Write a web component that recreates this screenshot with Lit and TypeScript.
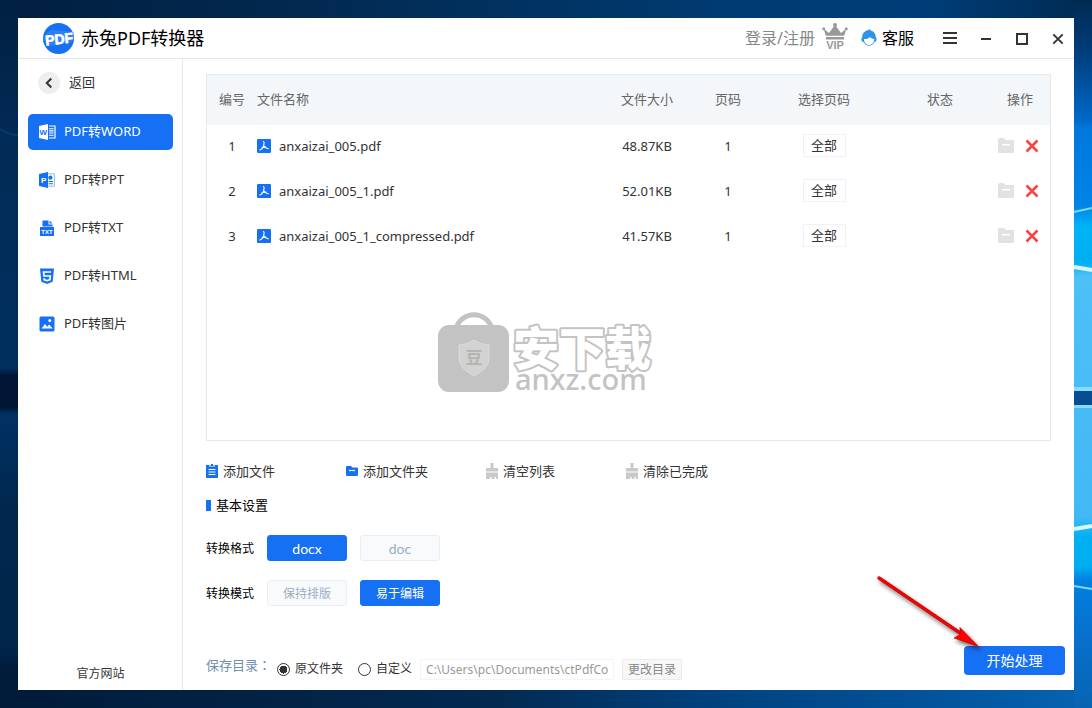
import { LitElement, html, css, svg, nothing } from "lit";
import { customElement, state } from "lit/decorators.js";
import { classMap } from "lit/directives/class-map.js";

const icons = {
  word: svg`<path d="M1 3 10 1v16L1 15z" fill="#fff"/><path d="M11 3h6v12h-6" fill="none" stroke="#fff" stroke-width="1.2"/><path d="M11 5.8h4.6M11 7.9h4.6M11 10h4.6M11 12.2h4.6" stroke="#fff" stroke-width="1.1"/><text x="5.4" y="12" font-size="8" font-weight="700" text-anchor="middle" fill="#1670f3">W</text>`,
  ppt: svg`<path d="M1 3 10 1v16L1 15z" fill="#1670f3"/><path d="M10 2.8h6.4v12.4H10" fill="none" stroke="#8db9f9" stroke-width="1"/><circle cx="12.4" cy="6.7" r="2.1" fill="#1670f3"/><path d="M10.5 10.5h4.5M10.5 12.7h4.5" stroke="#1670f3" stroke-width="1.1"/><text x="5.6" y="12" font-size="8" font-weight="700" text-anchor="middle" fill="#fff">P</text>`,
  txt: svg`<path d="M4.5 1.5h6v4h4v2h-10z" fill="#1670f3"/><path d="m11.5 1.5 3 3h-3z" fill="#1670f3"/><path d="M2 8h14v9H2z" fill="#1670f3"/><text x="9" y="15" font-size="6" font-weight="700" text-anchor="middle" fill="#fff">TXT</text>`,
  html: svg`<path d="M2 1.5h14l-1.3 13.2L9 17l-5.7-2.3z" fill="#1670f3"/><path d="M13 5H5.6l.4 4h6.3l-.4 3.6L9 13.7l-2.8-1.1-.1-1.3" fill="none" stroke="#fff" stroke-width="1.7"/>`,
  image: svg`<rect x="1.5" y="1.5" width="15" height="15" rx="1.5" fill="#1670f3"/><path d="M3.5 13.5 7 9l2.2 2.8 2-2.3 3.5 4z" fill="#fff"/><circle cx="11.8" cy="5.5" r="1.5" fill="#fff"/>`,
  addFile: svg`<path d="M0 1h12v13H0z" fill="#1670f3"/><path d="M3 1h6v2H3z" fill="#8db9f9"/><path d="M5 0h2v2H5z" fill="#1670f3"/><path d="M2.5 5.5h7M2.5 8h7M2.5 10.5h7" stroke="#fff"/>`,
  addFolder: svg`<path d="M0 3q0-1 1-1h4l1.5 1.5H11q1 0 1 1V11q0 1-1 1H1q-1 0-1-1z" fill="#1670f3"/><path d="M3 6.5h6" stroke="#fff" stroke-width="1.2"/>`,
  brush: svg`<path d="M4.500-1h3v5H12V7.500H0V4h4.500z" fill="#c9c9c9"/><path d="M0 8.500h12V15h-2v-2H8.500v2H5.500v-2H4v2H0z" fill="#c9c9c9"/>`,
};

const tasks = [
  { icon: icons.word, label: "PDF转WORD" },
  { icon: icons.ppt, label: "PDF转PPT" },
  { icon: icons.txt, label: "PDF转TXT" },
  { icon: icons.html, label: "PDF转HTML" },
  { icon: icons.image, label: "PDF转图片" },
];

const files = [
  { name: "anxaizai_005.pdf", size: "48.87KB", pages: 1 },
  { name: "anxaizai_005_1.pdf", size: "52.01KB", pages: 1 },
  { name: "anxaizai_005_1_compressed.pdf", size: "41.57KB", pages: 1 },
];

const tools = [
  { icon: icons.addFile, label: "添加文件" },
  { icon: icons.addFolder, label: "添加文件夹" },
  { icon: icons.brush, label: "清空列表" },
  { icon: icons.brush, label: "清除已完成" },
];

@customElement("desktop-wallpaper")
class DesktopWallpaper extends LitElement {
  static styles = css`
    :host { display: block; position: absolute; inset: 0; }
    svg { display: block; width: 100%; height: 100%; }
  `;
  render() {
    return html`<svg viewBox="0 0 1092 708" preserveAspectRatio="none" aria-hidden="true">
      <defs>
        <linearGradient id="top"><stop offset="0" stop-color="#011f40"/><stop offset=".3" stop-color="#022a52"/><stop offset=".68" stop-color="#003c73"/><stop offset=".85" stop-color="#003d78"/><stop offset="1" stop-color="#002a52"/></linearGradient>
        <linearGradient id="bottom"><stop offset="0" stop-color="#011b39"/><stop offset=".45" stop-color="#03294f"/><stop offset=".64" stop-color="#00407b"/><stop offset=".85" stop-color="#02539b"/><stop offset="1" stop-color="#0764b2"/></linearGradient>
        <linearGradient id="left" x2="0" y2="1"><stop offset="0" stop-color="#012041"/><stop offset=".19" stop-color="#022a56"/><stop offset=".52" stop-color="#00305f"/><stop offset=".53" stop-color="#001634"/><stop offset=".575" stop-color="#001634"/><stop offset=".585" stop-color="#003263"/><stop offset=".72" stop-color="#00274e"/><stop offset=".92" stop-color="#00254b"/><stop offset=".94" stop-color="#011d3c"/><stop offset="1" stop-color="#011b39"/></linearGradient>
        <linearGradient id="right" x2="0" y2="1"><stop offset="0" stop-color="#002a52"/><stop offset=".07" stop-color="#003c78"/><stop offset=".17" stop-color="#0068c8"/><stop offset=".18" stop-color="#0078dc"/><stop offset=".29" stop-color="#0084e8"/><stop offset=".32" stop-color="#00b4f4"/><stop offset=".37" stop-color="#00aef2"/><stop offset=".39" stop-color="#4cc0f7"/><stop offset=".73" stop-color="#42b8f5"/><stop offset=".76" stop-color="#00b0f2"/><stop offset=".8" stop-color="#00aef2"/><stop offset=".82" stop-color="#0080e0"/><stop offset=".9" stop-color="#0870cc"/><stop offset="1" stop-color="#0764b2"/></linearGradient>
      </defs>
      <path d="M0 0h1092v18H0z" fill="url(#top)"/>
      <path d="M0 690h1092v18H0z" fill="url(#bottom)"/>
      <path d="M0 0h18v708H0z" fill="url(#left)"/>
      <path d="M1074 0h18v708h-18z" fill="url(#right)"/>
      <path d="M0 129q9 6 18 6" fill="none" stroke="#064a80" stroke-width="2" opacity=".6"/>
      <path d="m1074 212 18-4M1074 586l18 3" stroke="#7fd8f8" stroke-width="2"/>
      <path d="m1074 267 18 3M1074 529l18-3" stroke="#d8f6fb" stroke-width="4"/>
      <path d="M1074 387h18v21h-18z" fill="#8adcfb"/>
      <path d="M1074 391h18v14h-18z" fill="#084c94"/>
    </svg>`;
  }
}

@customElement("app-root")
class AppRoot extends LitElement {
  @state() private task = 0;
  @state() private format = "docx";
  @state() private mode = "易于编辑";

  static styles = css`
    :host {
      display: flex;
      position: relative;
      box-sizing: border-box;
      min-height: 100vh;
      padding: 18px;
      background: #012041;
      color: #333;
      font: 13px/18px "Noto Sans", "Noto Sans CJK SC", sans-serif;
    }
    * { box-sizing: border-box; }
    button, input { font: inherit; color: inherit; margin: 0; }
    button { display: flex; align-items: center; justify-content: center; padding: 0; border: 0; background: none; white-space: nowrap; }
    svg { display: block; flex: none; overflow: visible; }
    a { color: inherit; text-decoration: none; }

    .window { position: relative; flex: 1; min-width: 0; display: flex; flex-direction: column; background: #fff; }
    .titlebar { display: flex; align-items: center; height: 41px; padding: 0 8px 0 25px; border-bottom: 1px solid #e8e8e8; }
    .title { flex: 1; margin: 0 0 0 7px; font-size: 18px; line-height: 24px; font-weight: 400; color: #000; }
    .account { display: flex; align-items: center; font-size: 16px; line-height: 24px; }
    .login { color: #888; margin-right: 7px; }
    .vip { margin-right: 13px; }
    .service { display: flex; align-items: center; gap: 5px; color: #000; }
    .controls { display: flex; gap: 20px; margin-left: 28px; }
    .controls button { width: 16px; height: 18px; }

    .body { flex: 1; display: flex; min-height: 0; }
    .sidebar { flex: none; display: flex; flex-direction: column; width: 165px; padding: 13px 9px 7px 10px; border-right: 1px solid #e8e8e8; }
    .back { align-self: flex-start; gap: 9px; margin-left: 10px; height: 22px; }
    .tasks { display: flex; flex-direction: column; gap: 12px; margin-top: 20px; }
    .task { justify-content: flex-start; gap: 8px; height: 36px; padding-left: 10px; border-radius: 5px; }
    .task.active { background: #1670f3; color: #fff; }
    .site { margin-top: auto; text-align: center; font-size: 12px; }

    .main { flex: 1; min-width: 0; display: flex; flex-direction: column; padding: 15px 0 10px 23px; }
    .panel { flex: 1; min-height: 240px; margin-right: 23px; border: 1px solid #e6e8ea; }
    table { width: 100%; border-collapse: collapse; table-layout: fixed; }
    th { height: 50px; padding: 0 0 2px; background: #f3f7fa; color: #666; font-weight: 400; }
    td { height: 45px; padding: 0 0 4px; text-align: center; }
    .col-no { width: 50px; }
    .col-size { width: 90px; }
    .col-page { width: 72px; }
    .col-range { width: 120px; }
    .col-status { width: 112px; }
    .col-ops { width: 54px; }
    .left { text-align: left; }
    th.ops { padding-right: 6px; }
    .file { display: flex; align-items: center; gap: 8px; }
    .range { width: 43px; height: 23px; margin: 0 auto; padding-bottom: 2px; border: 1px solid #f0f1f2; }
    .ops-cell { display: flex; align-items: center; gap: 11px; padding-left: 2px; }

    .tools { display: flex; height: 18px; margin-top: 22px; }
    .tool { width: 140px; justify-content: flex-start; gap: 5px; }
    .label { padding-bottom: 2px; }
    h2 { display: flex; align-items: center; gap: 5px; margin: 15px 0 0; font-size: 13px; line-height: 18px; font-weight: 400; color: #000; }
    h2::before { content: ""; width: 5px; height: 11px; background: #1670f3; }
    .settings { display: grid; gap: 19px; margin-top: 21px; font-size: 12px; color: #000; }
    .setting { display: flex; align-items: center; gap: 13px; }
    .setting > span { padding-top: 2px; }
    .choice { width: 80px; height: 26px; padding-top: 2px; border: 1px solid #e9eff6; border-radius: 3px; background: #f8fafc; color: #9aaec5; }
    .choice.on { border-color: #1670f3; background: #1670f3; color: #fff; }
    .choice.latin { font-family: Lato, "Noto Sans CJK SC", sans-serif; font-size: 14px; }

    .save { display: flex; align-items: flex-end; margin-top: 40px; padding-right: 9px; font-size: 12px; }
    .save-label { margin: 0 6px 6px 0; font-size: 13px; color: #6f8eae; }
    .colon { font-family: "Noto Sans CJK TC", sans-serif; }
    .radio { display: flex; align-items: center; gap: 5px; height: 22px; margin-right: 15px; }
    .radio input { appearance: none; width: 13px; height: 13px; border: 1px solid #333; border-radius: 50%; }
    .radio input:checked { background: radial-gradient(circle, #333 0 4px, transparent 4px); }
    .radio.custom { margin-right: 8px; }
    .path { width: 194px; height: 21px; padding: 0 5px; border: 1px solid #f3f4f6; border-radius: 0; background: #fff; color: #999; }
    .change { width: 60px; height: 21px; margin-left: 8px; border: 1px solid #ececec; background: #f7f7f7; color: #888; }
    .start { width: 101px; height: 29px; margin: 0 0 5px auto; border-radius: 4px; background: #1670f3; color: #fff; font-size: 14px; }

    .watermark { position: absolute; left: 50%; top: 50%; transform: translate(-50%, -50%); pointer-events: none; }
    .pointer { position: absolute; right: 89px; bottom: 38px; pointer-events: none; }
  `;

  private choice(value: string, current: string, pick: (v: string) => void, latin = false) {
    return html`<button type="button" class=${classMap({ choice: true, latin, on: value === current })} @click=${() => pick(value)}>${value}</button>`;
  }

  private renderTitlebar() {
    return html`<header class="titlebar">
      <svg width="31" height="31" viewBox="0 0 31 31" aria-hidden="true">
        <circle cx="15.5" cy="15.5" r="15.5" fill="#1670f3"/>
        <path d="M0 15 5 9l4-2 22 2-2 10-21 4z" fill="#4a90f6" opacity=".5"/>
        <text x="16" y="21" text-anchor="middle" font-family="Liberation Sans" font-size="14" font-weight="700" fill="#fff" stroke="#fff" stroke-width=".6" transform="rotate(-6 15.5 15.5)">PDF</text>
      </svg>
      <h1 class="title">赤兔PDF转换器</h1>
      <div class="account">
        <a class="login" href="#">登录/注册</a>
        <svg class="vip" width="26" height="32" viewBox="0 0 26 32" aria-hidden="true">
          <g fill="#999"><path d="m1.500 6.500 5.500 4.500 5.200-7h1.600l5.200 7 5.500-4.500-2.300 7.300H3.800z"/><circle cx="1.700" cy="6.800" r="1.500"/><circle cx="13" cy="3" r="2"/><circle cx="24.300" cy="6.800" r="1.500"/><path d="M4 15h18v2.500H4z"/></g>
          <text x="13" y="27" text-anchor="middle" font-family="Liberation Sans" font-size="11" font-weight="700" fill="#999">VIP</text>
        </svg>
        <a class="service" href="#">
          <svg width="16" height="18" viewBox="0 0 16 18" aria-hidden="true"><path d="M8.500 0 7 1.300C3 2 1.200 5 1.300 8-.2 9.500.2 13 2.500 13c1.200 2.400 3.200 3.700 5.500 3.700s4.300-1.300 5.500-3.700c2.300 0 2.700-3.500 1.200-5C14.800 4.500 12.500 2 9.500 1.500z" fill="#2d92ea"/><path d="M3 10c2.500.2 4.500-.5 6-2 1 1.300 2.500 2 4.300 2 0 3.500-2.300 6-5.300 6s-5-2.500-5-6z" fill="#fff"/></svg>
          客服
        </a>
      </div>
      <div class="controls">
        <button type="button" aria-label="菜单"><svg width="16" height="14" viewBox="0 0 16 14"><path d="M1 2h14M1 7h14M1 12h14" stroke="#333" stroke-width="2"/></svg></button>
        <button type="button" aria-label="最小化"><svg width="12" height="12" viewBox="0 0 12 12"><path d="M1 7h10" stroke="#333" stroke-width="2"/></svg></button>
        <button type="button" aria-label="最大化"><svg width="12" height="12" viewBox="0 0 12 12"><path d="M1 2h10v10H1z" fill="none" stroke="#333" stroke-width="2"/></svg></button>
        <button type="button" aria-label="关闭"><svg width="12" height="12" viewBox="0 0 12 12"><path d="m1.300 2.300 9.400 9.400M10.700 2.300l-9.400 9.400" stroke="#333" stroke-width="1.900"/></svg></button>
      </div>
    </header>`;
  }

  private renderTable() {
    return html`<table>
      <colgroup><col class="col-no"><col><col class="col-size"><col class="col-page"><col class="col-range"><col class="col-status"><col class="col-ops"></colgroup>
      <thead><tr><th>编号</th><th class="left">文件名称</th><th>文件大小</th><th>页码</th><th>选择页码</th><th>状态</th><th class="ops">操作</th></tr></thead>
      <tbody>${files.map((f, i) => html`<tr>
        <td>${i + 1}</td>
        <td><div class="file">
          <svg width="14" height="14" viewBox="0 0 14 14" aria-hidden="true"><rect width="14" height="14" rx="1" fill="#1670f3"/><path d="M6.200 2.300C7.800 3 7 5.500 6.500 7 5.500 9.500 4 11 2.300 11M6.500 5.500C7 8 9.500 9.800 11.800 9.800M4.500 9.200c1.500-.8 3.500-1.200 5-.9" fill="none" stroke="#fff" stroke-width="1.100"/></svg>
          <span>${f.name}</span></div></td>
        <td>${f.size}</td><td>${f.pages}</td>
        <td><button type="button" class="range">全部</button></td>
        <td>${nothing}</td>
        <td><div class="ops-cell">
          <button type="button" aria-label="打开文件夹"><svg width="16" height="15" viewBox="0 0 16 15"><path d="M0 1.500Q0 0 1.500 0H6l1.500 2H15q1 0 1 1v11q0 1-1 1H1q-1 0-1-1z" fill="#e2e2e2"/><path d="M4 6.700h8" stroke="#fff" stroke-width="1.600"/></svg></button>
          <button type="button" aria-label="删除"><svg width="14" height="14" viewBox="0 0 14 14"><path d="m1.500 1.500 11 11M12.500 1.500l-11 11" stroke="#f94444" stroke-width="2.600"/></svg></button>
        </div></td>
      </tr>`)}</tbody>
    </table>`;
  }

  render() {
    return html`
      <desktop-wallpaper></desktop-wallpaper>
      <div class="window">
        ${this.renderTitlebar()}
        <div class="body">
          <nav class="sidebar">
            <button type="button" class="back"><svg width="22" height="22" viewBox="0 0 22 22" aria-hidden="true"><circle cx="11" cy="11" r="11" fill="#eee"/><path d="M13.300 6.500 8.800 11l4.500 4.500" fill="none" stroke="#333" stroke-width="2"/></svg><span class="label">返回</span></button>
            <div class="tasks">${tasks.map((t, i) => html`<button type="button" class=${classMap({ task: true, active: i === this.task })} @click=${() => (this.task = i)}>
              <svg width="18" height="18" viewBox="0 0 18 18" font-family="Liberation Sans" aria-hidden="true">${t.icon}</svg><span class="label">${t.label}</span></button>`)}</div>
            <a class="site" href="#">官方网站</a>
          </nav>
          <main class="main">
            <section class="panel">${this.renderTable()}</section>
            <div class="tools">${tools.map((t) => html`<button type="button" class="tool"><svg width="12" height="16" viewBox="0 0 12 16" aria-hidden="true">${t.icon}</svg><span class="label">${t.label}</span></button>`)}</div>
            <h2>基本设置</h2>
            <div class="settings">
              <div class="setting" role="group" aria-label="转换格式"><span>转换格式</span>
                ${this.choice("docx", this.format, (v) => (this.format = v), true)}${this.choice("doc", this.format, (v) => (this.format = v), true)}</div>
              <div class="setting" role="group" aria-label="转换模式"><span>转换模式</span>
                ${this.choice("保持排版", this.mode, (v) => (this.mode = v))}${this.choice("易于编辑", this.mode, (v) => (this.mode = v))}</div>
            </div>
            <div class="save">
              <span class="save-label">保存目录<span class="colon">：</span></span>
              <label class="radio"><input type="radio" name="dir" checked>原文件夹</label>
              <label class="radio custom"><input type="radio" name="dir">自定义</label>
              <input class="path" type="text" aria-label="保存目录" .value=${"C:\\Users\\pc\\Documents\\ctPdfConverter"}>
              <button type="button" class="change">更改目录</button>
              <button type="button" class="start">开始处理</button>
            </div>
          </main>
        </div>
        <svg class="pointer" width="112" height="80" viewBox="0 0 112 80" aria-hidden="true">
          <defs><filter id="soft" x="-20%" y="-20%" width="150%" height="150%"><feDropShadow dx="2" dy="3" stdDeviation="2" flood-color="#000" flood-opacity=".55"/></filter></defs>
          <g filter="url(#soft)"><path d="M6 6 87 61" stroke="#9b1414" stroke-width="3.400" stroke-linecap="round"/><path d="M6 6 87 61" stroke="#f00" stroke-width="2.400" stroke-linecap="round"/><path d="m106 75-25-9 6-3.500v-7z" fill="#f00" stroke="#b01010" stroke-width=".7"/></g>
        </svg>
      </div>
      <svg class="watermark" width="216" height="86" viewBox="0 0 216 86" aria-hidden="true">
        <path d="M18 18a18.500 18.500 0 0 1 36 0" fill="none" stroke="#c3c3c3" stroke-width="5"/>
        <rect x="0" y="14" width="71" height="67" rx="11" fill="#c3c3c3"/>
        <path d="M36 29q7 5 15 5v14q0 9-15 17-15-8-15-17V34q8 0 15-5z" fill="#d2d2d0" stroke="#dcdcdc"/>
        <text x="36" y="53" text-anchor="middle" font-family="Noto Sans CJK SC" font-size="17" font-weight="700" fill="#b4b4b4">豆</text>
        <text x="75" y="54" font-family="Noto Sans CJK SC" font-size="46" font-weight="900" fill="#fff" stroke="#c3c3c3" stroke-width="4" stroke-linejoin="round" paint-order="stroke">安下载</text>
        <text x="77" y="79" font-family="Noto Sans" font-size="29" font-weight="500" fill="#c3c3c3">anxz.com</text>
      </svg>`;
  }
}
